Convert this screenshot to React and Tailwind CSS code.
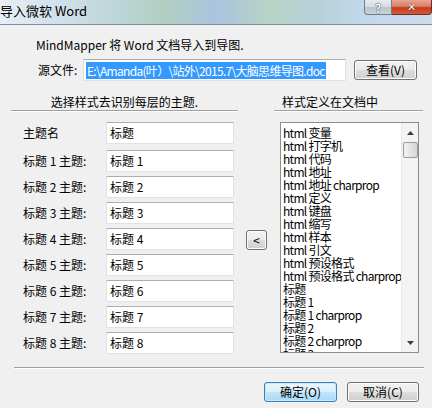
import React from "react";

const items = [
  "html 变量",
  "html 打字机",
  "html 代码",
  "html 地址",
  "html 地址 charprop",
  "html 定义",
  "html 键盘",
  "html 缩写",
  "html 样本",
  "html 引文",
  "html 预设格式",
  "html 预设格式 charprop",
  "标题",
  "标题 1",
  "标题 1 charprop",
  "标题 2",
  "标题 2 charprop",
  "标题 3",
];

const rows = [
  ["主题名", "标题"],
  ["标题 1 主题:", "标题 1"],
  ["标题 2 主题:", "标题 2"],
  ["标题 3 主题:", "标题 3"],
  ["标题 4 主题:", "标题 4"],
  ["标题 5 主题:", "标题 5"],
  ["标题 6 主题:", "标题 6"],
  ["标题 7 主题:", "标题 7"],
  ["标题 8 主题:", "标题 8"],
];

function TextBox({ children, className = "" }) {
  return (
    <div
      className={
        "h-[22px] bg-white border border-[#dfe3e8] border-t-[#abadb3] flex items-center leading-[16px] " +
        className
      }
    >
      {children}
    </div>
  );
}

function Btn({ children, className = "", primary = false }) {
  return (
    <div
      className={
        "h-[20px] rounded-[3px] border flex items-center justify-center leading-[16px] " +
        (primary
          ? "border-[#3c7fb1] bg-[linear-gradient(to_bottom,#eaf6fd_0%,#d9f0fc_50%,#bee6fd_51%,#a7d9f5_100%)] shadow-[inset_0_0_0_1px_#c8e8fb] "
          : "border-[#707070] bg-[linear-gradient(to_bottom,#f2f2f2_0%,#ebebeb_50%,#dddddd_51%,#cfcfcf_100%)] shadow-[inset_0_0_0_1px_#fbfbfb] ") +
        className
      }
    >
      {children}
    </div>
  );
}

export default function App() {
  return (
    <div className="w-[432px] h-[408px] overflow-hidden bg-[#f0f0f0] flex flex-col text-[12px] text-black font-['Noto_Sans_CJK_SC','Liberation_Sans',sans-serif]">
      {/* title bar */}
      <div className="h-[25px] shrink-0 flex items-start border-b border-[#7c8da2] bg-[linear-gradient(to_right,#e8eff6_0%,#d3e2ee_12%,#bcd5d6_28%,#b2cfc2_38%,#a9c4df_50%,#b7d3c4_62%,#b6d0d6_72%,#c3d8ea_85%,#cbdcec_100%)]">
        <span className="mt-[3px] text-[13px] leading-[16px] text-black">导入微软 Word</span>
        <div className="ml-auto flex">
          <div className="w-[28px] h-[15px] rounded-bl-[4px] border border-t-0 border-[#707d8c] bg-[linear-gradient(to_bottom,#e6ebef_0%,#d3dbe2_50%,#b9c4cd_51%,#c9d3da_100%)] flex items-center justify-center text-[12px] leading-[13px] font-bold text-white [text-shadow:0_0_1px_#333,0_0_1px_#333]">
            ?
          </div>
          <div className="w-[40px] h-[15px] rounded-br-[4px] border border-t-0 border-l-0 border-[#6e2d22] bg-[linear-gradient(to_bottom,#e9a593_0%,#db7e67_45%,#c53a1f_55%,#d35b3a_100%)] flex items-center justify-center text-[11px] leading-[13px] font-bold text-white font-['DejaVu_Sans',sans-serif] [text-shadow:0_0_1px_#411,0_0_1px_#411]">
            ✕
          </div>
        </div>
      </div>

      {/* intro */}
      <div className="mt-[12px] pl-[36px] h-[16px] leading-[16px] whitespace-nowrap">
        MindMapper 将 Word 文档导入到导图.
      </div>

      {/* source row */}
      <div className="mt-[6px] flex items-center h-[22px]">
        <span className="pl-[38px] w-[83px] leading-[16px]">源文件:</span>
        <TextBox className="w-[263px] pl-[2px] overflow-hidden whitespace-nowrap">
          <span className="bg-[#3399ff] text-white leading-[17px] px-[1px] tracking-[-0.7px]">
            E:\Amanda(叶）\站外\2015.7\大脑思维导图.doc
          </span>
        </TextBox>
        <Btn className="ml-[8px] w-[63px]">查看(V)</Btn>
      </div>

      {/* section headers */}
      <div className="mt-[13px] flex">
        <div className="ml-[11px] w-[227px] flex flex-col">
          <div className="h-[16px] leading-[16px] text-center whitespace-nowrap">选择样式去识别每层的主题.</div>
          <div className="h-[1px] bg-[#a0a0a0]" />
          <div className="h-[1px] bg-white" />
        </div>
        <div className="ml-[36px] w-[149px] flex flex-col">
          <div className="h-[16px] leading-[16px] pl-[8px] whitespace-nowrap">样式定义在文档中</div>
          <div className="h-[1px] bg-[#a0a0a0]" />
          <div className="h-[1px] bg-white" />
        </div>
      </div>

      {/* main area */}
      <div className="mt-[10px] flex items-start h-[231px]">
        <div className="ml-[23px] flex flex-col">
          {rows.map(([label, val], i) => (
            <div
              key={label}
              className={"flex items-center " + (i === 0 ? "mb-[6px]" : "mb-[4px]")}
            >
              <span className="w-[83px] leading-[16px] whitespace-nowrap">{label}</span>
              <TextBox className="w-[128px] pl-[3px]">{val}</TextBox>
            </div>
          ))}
        </div>
        <Btn className="ml-[12px] mt-[108px] w-[21px]">&lt;</Btn>
        <div className="ml-[13px] w-[139px] h-[231px] border border-[#8a8d92] bg-white flex overflow-hidden">
          <div className="flex-1 pt-[3px] pl-[2px] overflow-hidden tracking-[-0.7px]">
            {items.map((t) => (
              <div key={t} className="h-[13px] leading-[13px] whitespace-nowrap">
                {t}
              </div>
            ))}
          </div>
          <div className="w-[17px] shrink-0 bg-[#f3f3f3] border-l border-[#e8e8e8] flex flex-col items-center">
            <div className="h-[19px] flex items-center justify-center">
              <svg width="7" height="4" viewBox="0 0 7 4">
                <path d="M3.5 0 L7 4 L0 4 Z" fill="#3c3c3c" />
              </svg>
            </div>
            <div className="w-[15px] h-[16px] rounded-[2px] border border-[#9a9a9a] bg-[linear-gradient(to_right,#f2f2f2,#e3e3e3_50%,#d6d6d6)]" />
            <div className="flex-1" />
            <div className="h-[19px] flex items-center justify-center">
              <svg width="7" height="4" viewBox="0 0 7 4">
                <path d="M0 0 L7 0 L3.5 4 Z" fill="#3c3c3c" />
              </svg>
            </div>
          </div>
        </div>
      </div>

      {/* bottom separator */}
      <div className="mt-[14px] ml-[14px] w-[410px] flex flex-col">
        <div className="h-[1px] bg-[#a0a0a0]" />
        <div className="h-[1px] bg-white" />
      </div>

      {/* buttons */}
      <div className="mt-[13px] flex">
        <Btn primary className="ml-[264px] w-[73px]">确定(O)</Btn>
        <Btn className="ml-[10px] w-[72px]">取消(C)</Btn>
      </div>
    </div>
  );
}
